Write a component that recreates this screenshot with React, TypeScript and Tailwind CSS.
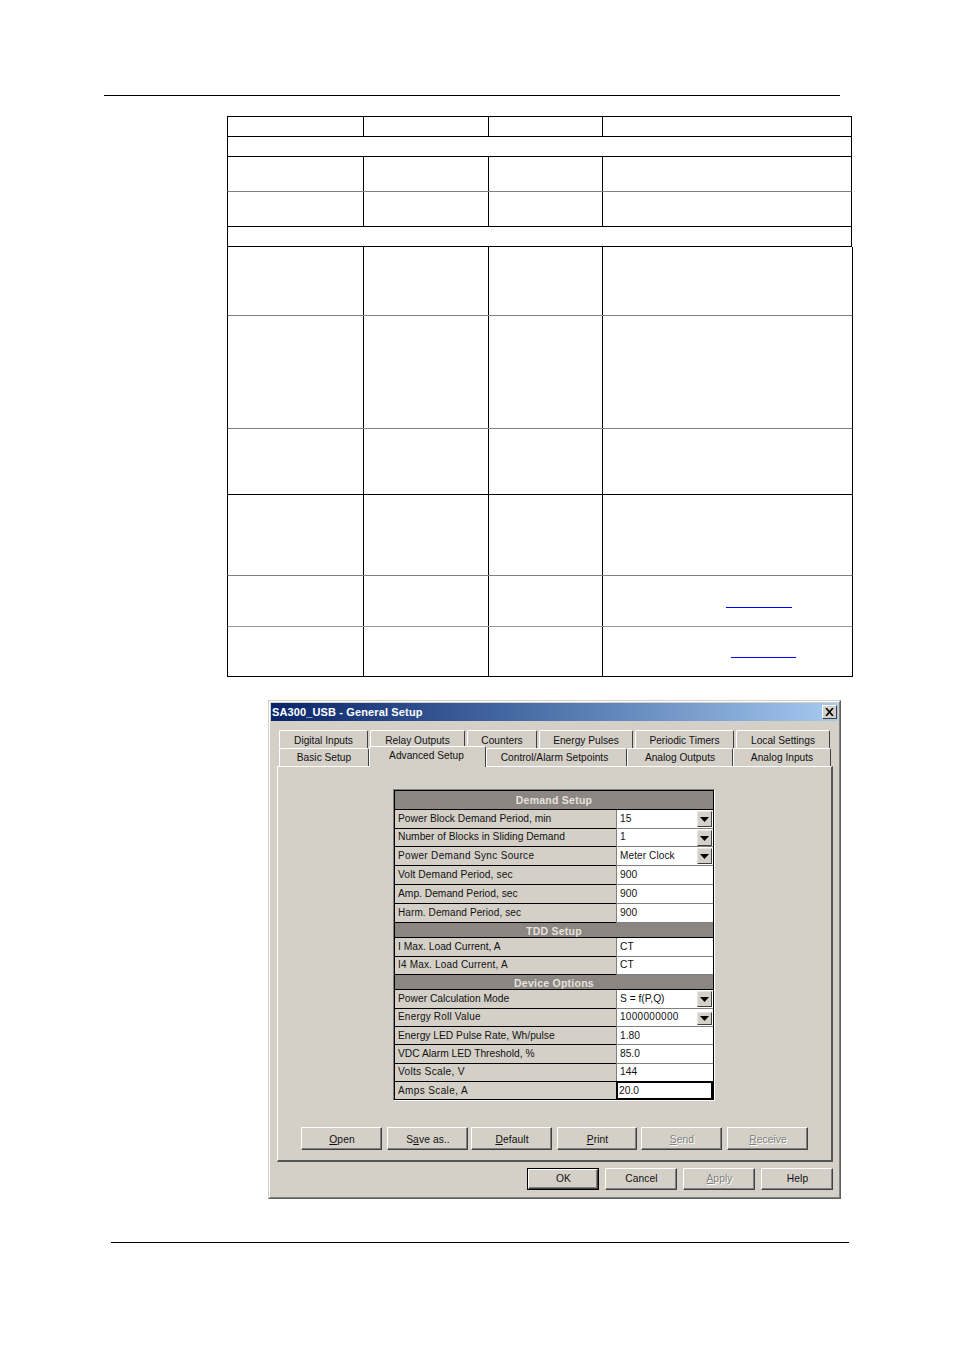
import React from "react";

const FONT = "font-['Liberation_Sans',Arial,sans-serif]";

const tableRows = [
  { h: "h-[20px]", line: "border-black", span: false, wide: false },
  { h: "h-[20px]", line: "border-black", span: true, wide: false },
  { h: "h-[35px]", line: "border-[#808080]", span: false, wide: false },
  { h: "h-[35px]", line: "border-black", span: false, wide: false },
  { h: "h-[20px]", line: "border-black", span: true, wide: false },
  { h: "h-[69px]", line: "border-[#808080]", span: false, wide: true },
  { h: "h-[113px]", line: "border-[#808080]", span: false, wide: true },
  { h: "h-[66px]", line: "border-black", span: false, wide: true },
  { h: "h-[81px]", line: "border-[#808080]", span: false, wide: true },
  { h: "h-[51px]", line: "border-[#999999]", span: false, wide: true, link: "ml-[123px] mt-[31px] w-[66px]" },
  { h: "h-[50px]", line: "border-black", span: false, wide: true, link: "ml-[128px] mt-[30px] w-[65px]" },
];

function SpecTable() {
  return (
    <div className="ml-[227px] mt-[20px] w-[626px] flex flex-col">
      <div className="h-px w-[625px] bg-black" />
      {tableRows.map((r, i) => (
        <div
          key={i}
          className={`flex border-b border-l border-r border-l-black border-r-black ${r.h} ${r.line} ${r.wide ? "w-[626px]" : "w-[625px]"}`}
        >
          {!r.span && (
            <>
              <div className="w-[135px] shrink-0" />
              <div className="w-[125px] shrink-0 border-l border-black" />
              <div className="w-[114px] shrink-0 border-l border-black" />
              <div className="flex-1 border-l border-black">
                {r.link && <div className={`h-px bg-[#0000ff] ${r.link}`} />}
              </div>
            </>
          )}
        </div>
      ))}
    </div>
  );
}

function Tab({ w, label, active, shift }: { w: string; label: string; active?: boolean; shift?: string }) {
  return (
    <div
      className={`${w} ${shift ?? ""} shrink-0 flex justify-center rounded-t-[2px] border-t border-l border-r border-t-white border-l-white border-r-[#404040] bg-[#d4d0c8] ${
        active ? "relative z-10 h-[21px] -mb-px pt-[2px]" : "h-[18px] pt-[2px]"
      }`}
    >
      <span className="text-[10.2px] leading-[13px] text-[#111]">{label}</span>
    </div>
  );
}

function TabTop({ w, label }: { w: string; label: string }) {
  return (
    <div className={`${w} shrink-0 flex justify-center rounded-t-[2px] border-t border-l border-r border-t-white border-l-white border-r-[#404040] bg-[#d4d0c8] h-[18px] pt-[3px]`}>
      <span className="text-[10.2px] leading-[13px] text-[#111]">{label}</span>
    </div>
  );
}

function Arrow({ small }: { small?: boolean }) {
  return (
    <div
      className={`absolute right-[1px] w-[15px] flex items-center justify-center bg-[#d4d0c8] border border-t-[#e8e6e0] border-l-[#e8e6e0] border-r-[#404040] border-b-[#404040] ${
        small ? "top-[3px] h-[13px]" : "top-[1px] h-[16px]"
      }`}
    >
      <svg width="9" height="5" viewBox="0 0 9 5">
        <polygon points="0,0 9,0 4.5,5" fill="#000" />
      </svg>
    </div>
  );
}

type Row =
  | { kind: "head"; h: string; pad: string; label: string }
  | {
      kind: "row";
      h: string;
      pad: string;
      label: string;
      value: string;
      text: string;
      vtext?: string;
      combo?: boolean;
      small?: boolean;
      focus?: boolean;
    };

const base = "text-[10.25px]";

const formRows: Row[] = [
  { kind: "head", h: "h-[19px]", pad: "pt-[1px]", label: "Demand Setup" },
  { kind: "row", h: "h-[19px]", pad: "pb-[2px]", text: base, label: "Power Block Demand Period, min", value: "15", combo: true },
  { kind: "row", h: "h-[18px]", pad: "pb-[2px]", text: base, label: "Number of Blocks in Sliding Demand", value: "1", combo: true },
  { kind: "row", h: "h-[19px]", pad: "pb-[2px]", text: "text-[10px] tracking-[0.33px]", vtext: "text-[10px] tracking-[0.12px]", label: "Power Demand Sync Source", value: "Meter Clock", combo: true },
  { kind: "row", h: "h-[19px]", pad: "pb-[2px]", text: "text-[10.25px] tracking-[0.08px]", label: "Volt Demand Period, sec", value: "900" },
  { kind: "row", h: "h-[19px]", pad: "pb-[2px]", text: base, label: "Amp. Demand Period, sec", value: "900" },
  { kind: "row", h: "h-[19px]", pad: "pb-[2px]", text: "text-[10px] tracking-[0.1px]", label: "Harm. Demand Period, sec", value: "900" },
  { kind: "head", h: "h-[15px]", pad: "pt-[3px]", label: "TDD Setup" },
  { kind: "row", h: "h-[19px]", pad: "pb-[2px]", text: base, label: "I Max. Load Current, A", value: "CT" },
  { kind: "row", h: "h-[18px]", pad: "pb-[2px]", text: "text-[10px] tracking-[0.18px]", label: "I4 Max. Load Current, A", value: "CT" },
  { kind: "head", h: "h-[15px]", pad: "pt-[3px]", label: "Device Options" },
  { kind: "row", h: "h-[19px]", pad: "pb-[2px]", text: base, label: "Power Calculation Mode", value: "S = f(P,Q)", combo: true },
  { kind: "row", h: "h-[18px]", pad: "pb-[2px]", text: "text-[10px] tracking-[0.2px]", vtext: "text-[10px] tracking-[0.3px]", label: "Energy Roll Value", value: "1000000000", combo: true, small: true },
  { kind: "row", h: "h-[18px]", pad: "pb-[0px]", text: base, label: "Energy LED Pulse Rate, Wh/pulse", value: "1.80" },
  { kind: "row", h: "h-[19px]", pad: "pb-[2px]", text: base, label: "VDC Alarm LED Threshold, %", value: "85.0" },
  { kind: "row", h: "h-[18px]", pad: "pb-[2px]", text: "text-[10.25px] tracking-[0.25px]", label: "Volts Scale, V", value: "144" },
  { kind: "row", h: "h-[18px]", pad: "pb-[0px]", text: "text-[10px] tracking-[0.38px]", label: "Amps Scale, A", value: "20.0", focus: true },
];

function Form() {
  return (
    <div className="ml-[115px] mt-[22px] w-[322px] h-[312px] border border-t-[#808080] border-l-[#808080] border-r-white border-b-white">
      <div className="w-[320px] h-[310px] border-t border-l border-r border-black flex flex-col">
        {formRows.map((r, i) =>
          r.kind === "head" ? (
            <div
              key={i}
              className={`${r.h} ${r.pad} shrink-0 flex items-center justify-center bg-[#8b8682] border-b border-black text-[10.5px] tracking-[0.25px] font-bold text-[#e6e2dc]`}
            >
              {r.label}
            </div>
          ) : (
            <div key={i} className={`${r.h} shrink-0 flex`}>
              <div className={`${r.pad} w-[221px] shrink-0 bg-[#d4d0c8] border-b border-black pl-[3px] flex items-center`}>
                <span className={`${r.text} leading-[13px] text-[#111] whitespace-nowrap`}>{r.label}</span>
              </div>
              <div
                className={`${r.pad} relative flex-1 flex items-center bg-white ${
                  r.focus
                    ? "border-2 border-black -mt-px pl-[1px]"
                    : "border-l border-b border-l-[#808080] border-b-[#808080] pl-[3px]"
                }`}
              >
                <span className={`${r.vtext ?? base} leading-[13px] text-[#111] whitespace-nowrap`}>{r.value}</span>
                {r.combo && <Arrow small={r.small} />}
              </div>
            </div>
          )
        )}
      </div>
    </div>
  );
}

function Btn({
  w,
  h,
  pad,
  disabled,
  isDefault,
  children,
}: {
  w: string;
  h: string;
  pad?: string;
  disabled?: boolean;
  isDefault?: boolean;
  children: React.ReactNode;
}) {
  return (
    <div className={`${w} ${h} shrink-0 ${isDefault ? "border border-black" : ""}`}>
      <div className="w-full h-full border border-t-white border-l-white border-r-[#404040] border-b-[#404040]">
        <div
          className={`w-full h-full flex items-center justify-center border-r border-b border-[#808080] pl-[2px] text-[10.25px] tracking-[0.1px] ${pad ?? ""} ${
            disabled ? "text-[#808080] [text-shadow:1px_1px_0_#fff]" : "text-[#111]"
          }`}
        >
          <span>{children}</span>
        </div>
      </div>
    </div>
  );
}

function Dialog() {
  return (
    <div className="ml-[268px] mt-[23px] w-[573px] h-[499px] border border-t-[#d4d0c8] border-l-[#d4d0c8] border-r-[#5f5f5f] border-b-[#5f5f5f]">
      <div className="w-full h-full border border-t-white border-l-white border-r-[#808080] border-b-[#808080] bg-[#d4d0c8] p-px flex flex-col">
        <div className="h-[18px] shrink-0 bg-gradient-to-r from-[#0a246a] to-[#a6caf0] flex items-center justify-between pl-px pr-[1px]">
          <span className="text-[11px] tracking-[0.13px] font-bold text-white leading-[14px]">SA300_USB - General Setup</span>
          <div className="w-[15px] h-[14px] flex items-center justify-center bg-[#d4d0c8] border border-t-white border-l-white border-r-[#404040] border-b-[#404040]">
            <svg width="9" height="8" viewBox="0 0 9 8">
              <path d="M1 0 L8 8 M8 0 L1 8" stroke="#000" strokeWidth="1.6" fill="none" />
            </svg>
          </div>
        </div>

        <div className="ml-[8px] mt-[9px] flex gap-[2px]">
          <TabTop w="w-[89px]" label="Digital Inputs" />
          <TabTop w="w-[95px]" label="Relay Outputs" />
          <TabTop w="w-[70px]" label="Counters" />
          <TabTop w="w-[94px]" label="Energy Pulses" />
          <TabTop w="w-[99px]" label="Periodic Timers" />
          <TabTop w="w-[94px]" label="Local Settings" />
        </div>
        <div className="ml-[8px] h-[18px] flex items-end">
          <Tab w="w-[90px]" label="Basic Setup" />
          <Tab active w="w-[117px]" shift="pr-[2px]" label="Advanced Setup" />
          <Tab w="w-[141px]" shift="pr-[4px]" label="Control/Alarm Setpoints" />
          <Tab w="w-[106px]" label="Analog Outputs" />
          <Tab w="w-[98px]" label="Analog Inputs" />
        </div>

        <div className="ml-[6px] w-[556px] h-[396px] shrink-0 border-t border-l border-t-white border-l-white border-r-2 border-b-2 border-r-[#555555] border-b-[#555555] flex flex-col">
          <Form />
          <div className="ml-[23px] mt-[26px] flex">
            <Btn pad="pt-[3px]" w="w-[81px]" h="h-[23px]"><u>O</u>pen</Btn>
            <div className="ml-[5px]"><Btn pad="pt-[3px]" w="w-[81px]" h="h-[23px]">S<u>a</u>ve as..</Btn></div>
            <div className="ml-[3px]"><Btn pad="pt-[3px]" w="w-[81px]" h="h-[23px]"><u>D</u>efault</Btn></div>
            <div className="ml-[5px]"><Btn pad="pt-[3px]" w="w-[80px]" h="h-[23px]"><u>P</u>rint</Btn></div>
            <div className="ml-[4px]"><Btn pad="pt-[3px]" disabled w="w-[81px]" h="h-[23px]"><u>S</u>end</Btn></div>
            <div className="ml-[5px]"><Btn pad="pt-[3px]" disabled w="w-[81px]" h="h-[23px]"><u>R</u>eceive</Btn></div>
          </div>
        </div>

        <div className="ml-[256px] mt-[6px] flex gap-[6px]">
          <Btn isDefault w="w-[72px]" h="h-[22px]">OK</Btn>
          <Btn w="w-[72px]" h="h-[22px]">Cancel</Btn>
          <Btn disabled w="w-[72px]" h="h-[22px]"><u>A</u>pply</Btn>
          <Btn w="w-[72px]" h="h-[22px]">Help</Btn>
        </div>
      </div>
    </div>
  );
}

export default function App() {
  return (
    <div className={`${FONT} w-[954px] h-[1350px] bg-white pt-[95px] flex flex-col`}>
      <div className="ml-[104px] w-[736px] h-px bg-black shrink-0" />
      <SpecTable />
      <Dialog />
      <div className="ml-[111px] mt-[43px] w-[738px] h-px bg-black shrink-0" />
    </div>
  );
}
